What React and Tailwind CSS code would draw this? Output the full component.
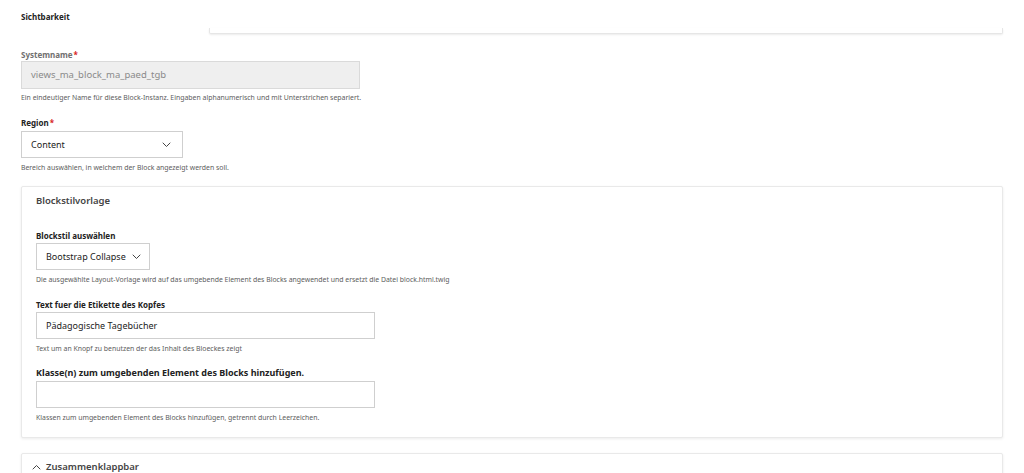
import React from "react";

const Chevron = ({ up = false }) => (
  <svg width="9" height="6" viewBox="0 0 9 6" fill="none" className="shrink-0">
    <polyline
      points={up ? "1,5 4.5,1.5 8,5" : "1,1 4.5,4.5 8,1"}
      stroke="#444"
      strokeWidth="1"
      strokeLinecap="round"
      strokeLinejoin="round"
    />
  </svg>
);

const Required = () => <span className="ml-[1px] text-[#d72222]">*</span>;

const Help = ({ children, className = "" }) => (
  <p className={`text-[6.9px] leading-[10px] text-[#5d5d5d] ${className}`}>{children}</p>
);

const Select = ({ value, width }) => (
  <div
    className={`flex h-[27px] items-center justify-between gap-[6px] whitespace-nowrap border border-[#cfcfcf] bg-white pl-[9px] pr-[11px] text-[9px] text-[#222] ${width}`}
  >
    <span>{value}</span>
    <Chevron />
  </div>
);

const TextInput = ({ value = "" }) => (
  <div className="mt-[2px] flex h-[27px] w-[339px] items-center border border-[#cfcfcf] bg-white px-[9px] text-[9px] text-[#222]">
    {value}
  </div>
);

export default function App() {
  return (
    <div
      className="h-[473px] w-full overflow-hidden bg-white"
      style={{ fontFamily: '"Noto Sans", "Open Sans", sans-serif' }}
    >
      {/* vertical tab header + end of pane */}
      <div className="flex h-[38px] items-start pt-[12px]">
        <div className="w-[209px] shrink-0 pl-[21px] text-[8px] font-bold leading-[10px] text-[#222]">
          Sichtbarkeit
        </div>
        <div className="mt-[16px] h-[6px] w-[794px] rounded-b-[2px] border border-t-0 border-[#e6e6e6] bg-white shadow-[0_1px_2px_rgba(0,0,0,0.08)]" />
      </div>

      <div className="px-[21px]">
        {/* Systemname */}
        <div className="mt-[12px] text-[8px] font-bold leading-[10px] text-[#707070]">
          Systemname
          <Required />
        </div>
        <div className="mt-[1px] flex h-[28px] w-[339px] items-center border border-[#dadada] bg-[#efefef] px-[9px] text-[9.5px] text-[#8a8a8a]">
          views_ma_block_ma_paed_tgb
        </div>
        <Help className="mt-[4px]">
          Ein eindeutiger Name für diese Block-Instanz. Eingaben alphanumerisch und mit Unterstrichen separiert.
        </Help>

        {/* Region */}
        <div className="mt-[15px] text-[8px] font-bold leading-[10px] text-[#222]">
          Region
          <Required />
        </div>
        <div className="mt-[3px]">
          <Select value="Content" width="w-[162px]" />
        </div>
        <Help className="mt-[5px]">Bereich auswählen, in welchem der Block angezeigt werden soll.</Help>

        {/* Blockstilvorlage */}
        <div className="mt-[13px] rounded-[2px] border border-[#e9e9e9] bg-white px-[14px] pb-[14px] pt-[8px] shadow-[0_1px_3px_rgba(0,0,0,0.08)]">
          <div className="text-[9.5px] font-semibold leading-[12px] text-[#444]">Blockstilvorlage</div>

          <div className="mt-[24px] text-[8px] font-bold leading-[10px] text-[#222]">Blockstil auswählen</div>
          <div className="mt-[2px]">
            <Select value="Bootstrap Collapse" width="w-[114px]" />
          </div>
          <Help className="mt-[5px]">
            Die ausgewählte Layout-Vorlage wird auf das umgebende Element des Blocks angewendet und ersetzt die Datei block.html.twig
          </Help>

          <div className="mt-[15px] text-[8px] font-bold leading-[10px] text-[#222]">
            Text fuer die Etikette des Kopfes
          </div>
          <TextInput value="Pädagogische Tagebücher" />
          <Help className="mt-[5px]">Text um an Knopf zu benutzen der das Inhalt des Bloeckes zeigt</Help>

          <div className="mt-[13px] text-[9px] font-bold leading-[12px] text-[#222]">
            Klasse(n) zum umgebenden Element des Blocks hinzufügen.
          </div>
          <TextInput />
          <Help className="mt-[5px]">
            Klassen zum umgebenden Element des Blocks hinzufügen, getrennt durch Leerzeichen.
          </Help>
        </div>

        {/* Zusammenklappbar */}
        <div className="mt-[15px] h-[60px] rounded-[2px] border border-[#e9e9e9] bg-white px-[10px] pt-[7px] shadow-[0_1px_3px_rgba(0,0,0,0.08)]">
          <div className="flex items-center gap-[5px] text-[9.5px] font-semibold leading-[12px] text-[#444]">
            <Chevron up />
            <span>Zusammenklappbar</span>
          </div>
        </div>
      </div>
    </div>
  );
}
